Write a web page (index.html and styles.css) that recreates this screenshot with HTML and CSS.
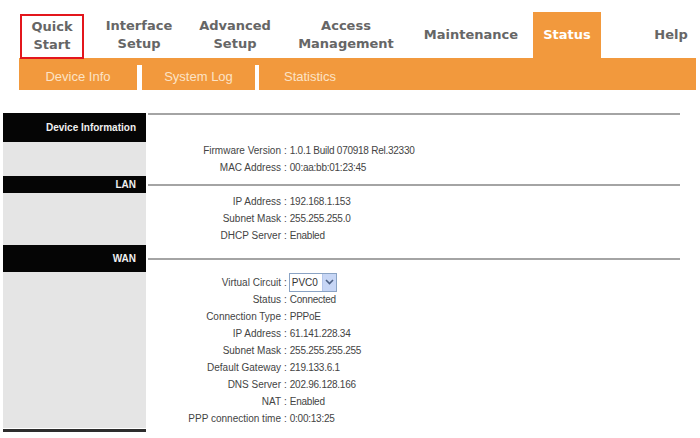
FILE: index.html
```html
<!DOCTYPE html>
<html>
<head>
<meta charset="utf-8">
<link rel="stylesheet" href="styles.css">
</head>
<body>
<div class="nav">
  <div class="tabs">
    <div class="tab t-quick"><span class="quickbox">Quick<br>Start</span></div>
    <div class="tab t-iface">Interface<br>Setup</div>
    <div class="tab t-adv">Advanced<br>Setup</div>
    <div class="tab t-access">Access<br>Management</div>
    <div class="tab t-maint">Maintenance</div>
    <div class="tab t-status active">Status</div>
    <div class="tab t-help">Help</div>
  </div>
  <div class="subbar">
    <div class="sub s1">Device Info</div>
    <div class="sep"></div>
    <div class="sub s2">System Log</div>
    <div class="sep sep2"></div>
    <div class="sub s3">Statistics</div>
  </div>
</div>

<div class="info">
  <div class="head h1">Device Information</div>
  <div class="rule r-top"></div>
  <div class="side b1"></div>
  <div class="rows b1">
    <div class="row"><span class="lbl">Firmware Version</span><span class="colon">:</span><span class="val">1.0.1 Build 070918 Rel.32330</span></div>
    <div class="row"><span class="lbl">MAC Address</span><span class="colon">:</span><span class="val">00:aa:bb:01:23:45</span></div>
  </div>

  <div class="head h2">LAN</div>
  <div class="rule r-mid h2"></div>
  <div class="side b2"></div>
  <div class="rows b2">
    <div class="row"><span class="lbl">IP Address</span><span class="colon">:</span><span class="val">192.168.1.153</span></div>
    <div class="row"><span class="lbl">Subnet Mask</span><span class="colon">:</span><span class="val">255.255.255.0</span></div>
    <div class="row"><span class="lbl">DHCP Server</span><span class="colon">:</span><span class="val">Enabled</span></div>
  </div>

  <div class="head h3">WAN</div>
  <div class="rule r-mid h3"></div>
  <div class="side b3"></div>
  <div class="rows b3">
    <div class="row row-sel"><span class="lbl">Virtual Circuit</span><span class="colon">:</span>
      <span class="select"><span class="sel-text">PVC0</span><span class="sel-btn"><svg width="9" height="6" viewBox="0 0 9 6"><path d="M1 1 L4.5 4.5 L8 1" fill="none" stroke="#4d6185" stroke-width="1.6"/></svg></span></span>
    </div>
    <div class="row"><span class="lbl">Status</span><span class="colon">:</span><span class="val">Connected</span></div>
    <div class="row"><span class="lbl">Connection Type</span><span class="colon">:</span><span class="val">PPPoE</span></div>
    <div class="row"><span class="lbl">IP Address</span><span class="colon">:</span><span class="val">61.141.228.34</span></div>
    <div class="row"><span class="lbl">Subnet Mask</span><span class="colon">:</span><span class="val">255.255.255.255</span></div>
    <div class="row"><span class="lbl">Default Gateway</span><span class="colon">:</span><span class="val">219.133.6.1</span></div>
    <div class="row"><span class="lbl">DNS Server</span><span class="colon">:</span><span class="val">202.96.128.166</span></div>
    <div class="row"><span class="lbl">NAT</span><span class="colon">:</span><span class="val">Enabled</span></div>
    <div class="row"><span class="lbl">PPP connection time</span><span class="colon">:</span><span class="val">0:00:13:25</span></div>
  </div>
  <div class="foot"></div>
</div>
</body>
</html>
```

FILE: styles.css
```css
html, body {
  margin: 0;
  padding: 0;
  background: #fff;
}

.nav {
  margin: 12px 0 0 19px;
  width: 677px;
}

.tabs {
  display: flex;
  height: 46px;
}

.tab {
  display: flex;
  align-items: center;
  justify-content: center;
  text-align: center;
  font-family: "DejaVu Sans", Verdana, sans-serif;
  font-weight: bold;
  font-size: 13px;
  line-height: 18px;
  color: #666;
}

.t-quick { width: 66px; position: relative; z-index: 1; }
.quickbox {
  display: block;
  align-self: flex-start;
  width: 64px;
  height: 45px;
  margin-top: 2px;
  padding-top: 2px;
  box-sizing: border-box;
  border: 2px solid #e3161c;
  line-height: 18px;
}
.t-iface { width: 108px; }
.t-adv { width: 84px; }
.t-access { width: 138px; }
.t-maint { width: 112px; }
.t-status { width: 68px; margin-left: 6px; }
.t-help { width: 50px; margin-left: auto; }

.tab.active {
  background: #f2993d;
  color: #fff;
  padding-bottom: 1px;
}

.subbar {
  display: flex;
  height: 32px;
  background: #f2993d;
}

.sub {
  display: flex;
  align-items: center;
  justify-content: center;
  font-family: "Liberation Sans", Arial, sans-serif;
  font-size: 13px;
  color: #fce3c6;
  padding-top: 4px;
}
.s1 { width: 118px; }
.s2 { width: 113px; }
.s3 { width: 102px; }

.sep {
  width: 5px;
  margin-top: 7px;
  background: #fff;
}
.sep2 { width: 4px; }

.info {
  display: grid;
  grid-template-columns: 143px 534px;
  margin: 23px 0 0 3px;
}

.head {
  background: #050505;
  color: #f0f0f0;
  font-family: "Liberation Sans", Arial, sans-serif;
  font-weight: bold;
  font-size: 10px;
  text-align: right;
  padding-right: 10px;
  display: flex;
  align-items: center;
  justify-content: flex-end;
}
.head.h1 { height: 29px; }
.head.h2 { height: 17px; }
.head.h3 { height: 27px; }

.rule::after {
  content: "";
  display: block;
  height: 2px;
  background: #a4a4a4;
  margin-left: 2px;
}
.rule.r-mid {
  display: flex;
  flex-direction: column;
  justify-content: center;
}
.rule.r-mid::after {
  width: 532px;
}

.side {
  background: #e5e5e5;
}
.b1 { height: 34px; }
.b2 { height: 52px; }
.b3 { height: 156px; }

.rows {
  font-family: "Liberation Sans", Arial, sans-serif;
  font-size: 10px;
  color: #444;
}

.row {
  display: flex;
  align-items: center;
  height: 17px;
}

.lbl {
  width: 135px;
  text-align: right;
  flex: none;
}

.colon {
  margin: 0 3px 0 3px;
}

.val {
  letter-spacing: -0.25px;
}

.row-sel {
  height: 18px;
  margin-top: 1px;
}

.select {
  display: inline-flex;
  align-items: stretch;
  height: 19px;
  box-sizing: border-box;
  border: 1px solid #8aa3c4;
  background: #fff;
  margin-left: -1px;
}
.sel-text {
  display: flex;
  align-items: center;
  padding: 0 4px 0 2px;
  font-size: 10px;
  color: #333;
}
.sel-btn {
  display: flex;
  align-items: center;
  justify-content: center;
  width: 13px;
  background: #c7d6f5;
  border-left: 1px solid #b5c6ea;
}

.foot {
  height: 3px;
  background: #2e2e2e;
  margin-top: 1px;
}
```
